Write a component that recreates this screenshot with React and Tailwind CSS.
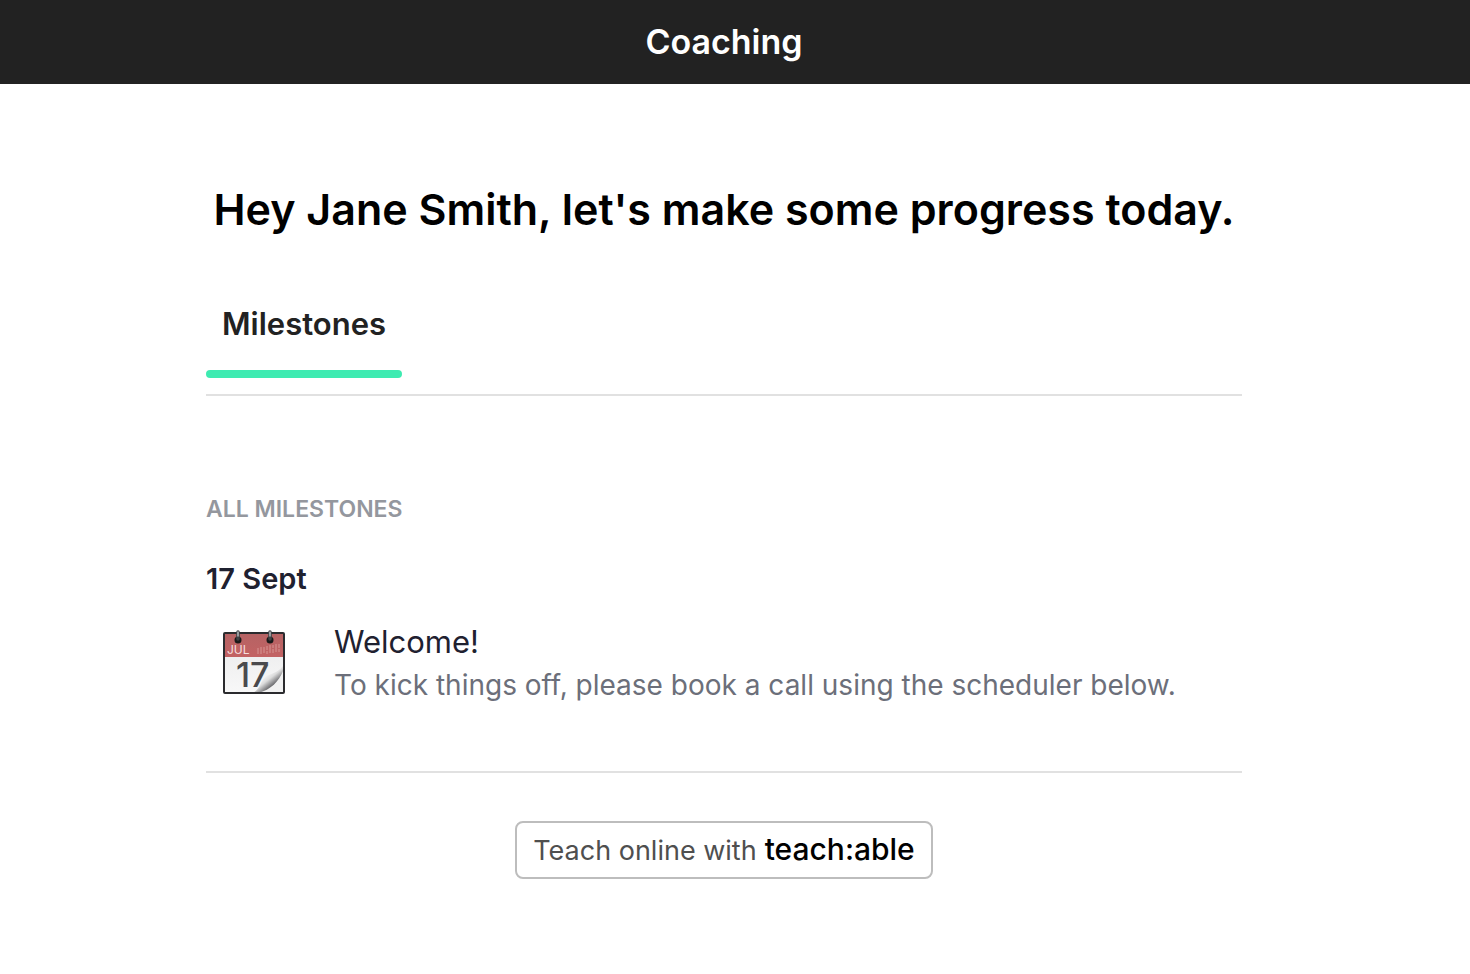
const milestones = [
  {
    id: 1,
    date: "17 Sept",
    title: "Welcome!",
    description: "To kick things off, please book a call using the scheduler below.",
  },
];

function CalendarIcon() {
  return (
    <svg viewBox="0 0 64 68" className="w-16 h-[68px]" aria-hidden="true">
      <defs>
        <linearGradient id="page" x1="0" y1="0" x2="0" y2="1">
          <stop offset="0" stopColor="#e9e9ea" />
          <stop offset="1" stopColor="#f8f8f8" />
        </linearGradient>
        <linearGradient id="top" x1="0" y1="0" x2="0" y2="1">
          <stop offset="0" stopColor="#b56364" />
          <stop offset="1" stopColor="#c36263" />
        </linearGradient>
        <linearGradient id="curl" gradientUnits="userSpaceOnUse" x1="42" y1="46" x2="53" y2="60">
          <stop offset="0" stopColor="#ffffff" />
          <stop offset="0.4" stopColor="#dcdcdc" />
          <stop offset="0.8" stopColor="#6d6d70" />
          <stop offset="1" stopColor="#b9b9b9" />
        </linearGradient>
      </defs>
      <rect x="2" y="5" width="60" height="60" rx="1" fill="url(#page)" />
      <rect x="2" y="5" width="60" height="24" fill="url(#top)" />
      <text x="5" y="26" fontSize="12" fill="#f6dede" fontFamily="Inter, sans-serif">
        JUL
      </text>
      <path
        d="M36 20v6M39 19v7M42 19v6M45 18v4M45 23v3M48 17v8M51 17v3M51 21v4M54 16v8M57 16v4M57 21v3"
        stroke="#d79593"
        strokeWidth="1"
      />
      <text x="14" y="59" fontSize="34" fontWeight="500" fill="#4a4a4d" fontFamily="Inter, sans-serif">
        17
      </text>
      <path d="M30 65C38 62 38 55 42 50C46 45 54 47 61 38V65Z" fill="url(#curl)" />
      <path d="M36 65C49 62 57 53 61 43V65Z" fill="#f1f1f1" />
      <rect x="2" y="5" width="60" height="60" rx="1" fill="none" stroke="#2b2b2e" strokeWidth="2" />
      <circle cx="16" cy="12" r="3.5" fill="#191919" />
      <circle cx="48" cy="12" r="3.5" fill="#191919" />
      <path d="M16 11V4M48 11V4" stroke="#3d4144" strokeWidth="3.5" strokeLinecap="round" />
      <path d="M16 8V4M48 8V4" stroke="#b5babd" strokeWidth="1.5" strokeLinecap="round" />
    </svg>
  );
}

export default function App() {
  return (
    <div className="min-h-screen bg-white font-['Inter',sans-serif]">
      <header className="bg-[#222222] pr-[22px] h-[84px] flex items-center justify-center">
        <p className="text-[34px] leading-10 font-semibold text-white">Coaching</p>
      </header>

      <main className="pr-[22px]">
        <div className="max-w-[1036px] mx-auto pt-24">
          <h1 className="text-[43px] leading-[58px] font-semibold text-black text-center">
            Hey Jane Smith, let's make some progress today.
          </h1>

          <nav className="mt-16 flex border-b-2 border-[#e1e1e1] pb-4">
            <a href="#milestones" className="block">
              <span className="block px-4 text-[31px] leading-[44px] font-semibold text-[#222222]">
                Milestones
              </span>
              <span className="block mt-6 h-2 rounded-full bg-[#3eebb1]" />
            </a>
          </nav>

          <section id="milestones" className="pt-24 pb-16 border-b-2 border-[#e1e1e1]">
            <h2 className="text-[23px] leading-[34px] font-semibold uppercase text-[#94979e]">
              All milestones
            </h2>
            {milestones.map((milestone) => (
              <div key={milestone.id} className="mt-8">
                <h3 className="text-[29px] leading-[42px] font-semibold text-[#1f2130]">
                  {milestone.date}
                </h3>
                <div className="mt-5 pl-4 flex items-start gap-12">
                  <div className="mt-2">
                    <CalendarIcon />
                  </div>
                  <div>
                    <p className="text-[31px] leading-[44px] text-[#1f2130]">{milestone.title}</p>
                    <p className="text-[28px] leading-[43px] text-[#6c6f7a]">
                      {milestone.description}
                    </p>
                  </div>
                </div>
              </div>
            ))}
          </section>

          <div className="mt-12 flex justify-center">
            <a
              href="#teachable"
              className="flex items-baseline gap-2 rounded-lg border-2 border-[#bdbdbd] px-4 py-2 text-[27px] leading-9 text-[#4f4f4f]"
            >
              Teach online with
              <span className="text-[30px] font-medium text-black">teach:able</span>
            </a>
          </div>
        </div>
      </main>
    </div>
  );
}
